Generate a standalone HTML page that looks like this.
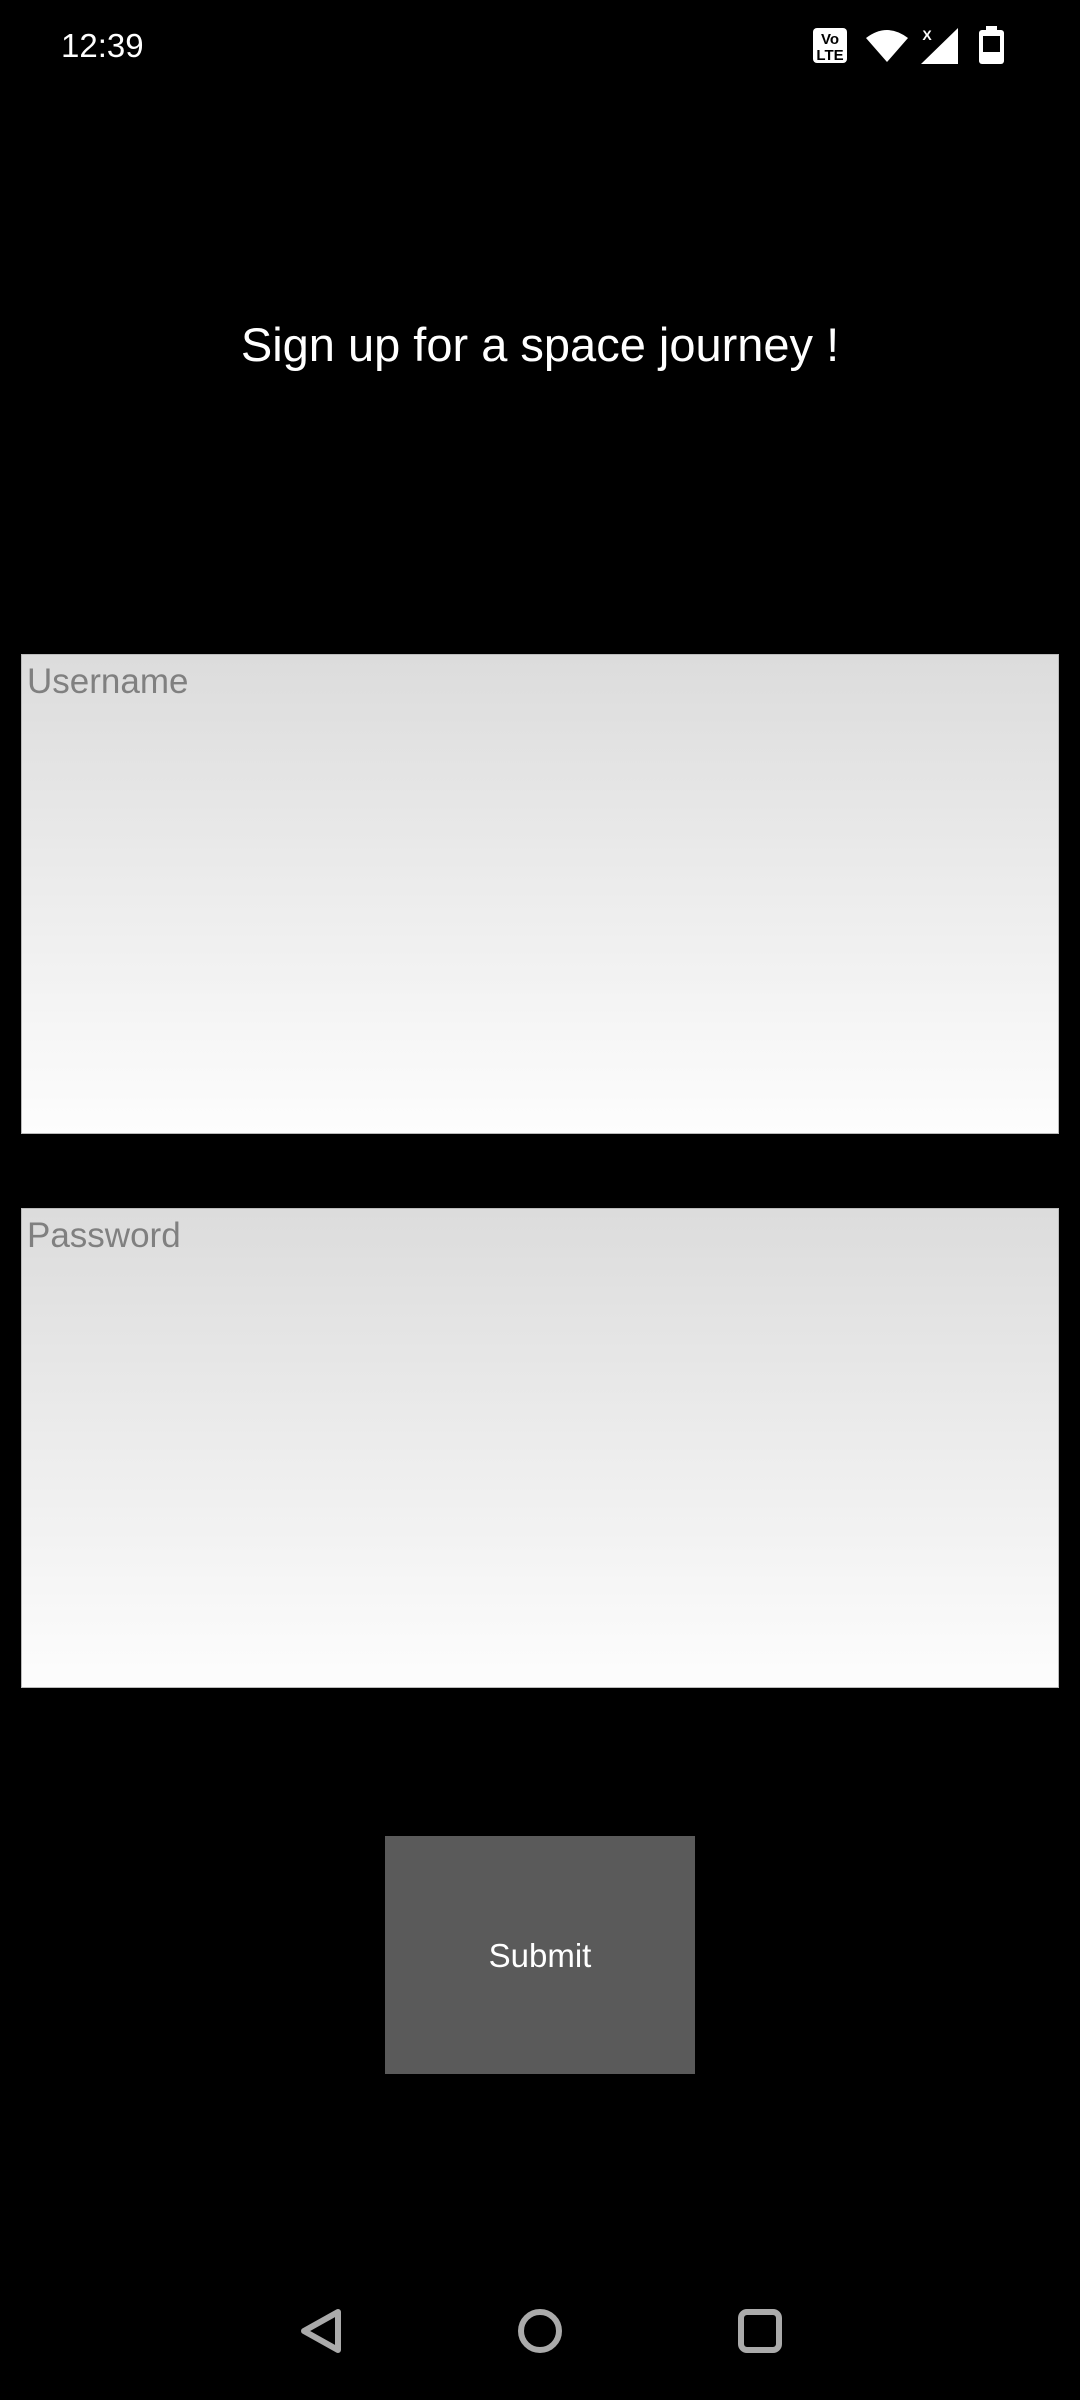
<!DOCTYPE html>
<html><head><meta charset="utf-8"><style>
html,body{margin:0;padding:0;background:#000;width:1080px;height:2400px;overflow:hidden;font-family:"Liberation Sans",sans-serif;}
.abs{position:absolute;}
.box{position:absolute;left:21px;width:1038px;height:480px;background:linear-gradient(#dcdcdc,#fdfdfd);box-sizing:border-box;border:1px solid #bbb;}
.ph{position:absolute;left:5px;top:7px;color:#808080;font-size:35px;}
</style></head><body>
<div class="abs" style="left:61px;top:27px;color:#fff;font-size:33px;">12:39</div>
<svg class="abs" style="left:810px;top:24px" width="210" height="44" viewBox="810 24 210 44">
 <rect x="813" y="28" width="34" height="35" rx="4" fill="#fff"/>
 <text x="830" y="44" font-size="15" font-weight="bold" text-anchor="middle" fill="#000" font-family="Liberation Sans">Vo</text>
 <text x="830" y="60" font-size="15" font-weight="bold" text-anchor="middle" fill="#000" font-family="Liberation Sans">LTE</text>
 <path d="M866 38 Q887 22 908 38 L887 62 Z" fill="#fff"/>
 <text x="927" y="40" font-size="14" font-weight="bold" text-anchor="middle" fill="#fff" font-family="Liberation Sans">X</text>
 <path d="M958 28 L958 64 L921 64 Z" fill="#fff"/>
 <rect x="979" y="30" width="25" height="34" rx="3" fill="#fff"/>
 <rect x="986" y="26" width="11" height="5" fill="#fff"/>
 <rect x="983" y="36" width="17" height="16" fill="#000"/>
</svg>
<div class="abs" style="left:0;width:1080px;top:317px;text-align:center;color:#fff;font-size:47px;">Sign up for a space journey !</div>
<div class="box" style="top:654px;"><div class="ph">Username</div></div>
<div class="box" style="top:1208px;"><div class="ph">Password</div></div>
<div class="abs" style="left:385px;top:1836px;width:310px;height:238px;background:#5a5a5a;color:#fff;font-size:33px;display:flex;align-items:center;justify-content:center;"><span style="position:relative;top:1px">Submit</span></div>
<svg class="abs" style="left:0;top:2290px" width="1080" height="90" viewBox="0 2290 1080 90">
 <path d="M338 2312 L338 2350 L304 2331 Z" fill="none" stroke="#aaa" stroke-width="6" stroke-linejoin="round"/>
 <circle cx="540" cy="2331" r="19" fill="none" stroke="#aaa" stroke-width="6"/>
 <rect x="741" y="2312" width="38" height="38" rx="6" fill="none" stroke="#aaa" stroke-width="6"/>
</svg>
</body></html>
